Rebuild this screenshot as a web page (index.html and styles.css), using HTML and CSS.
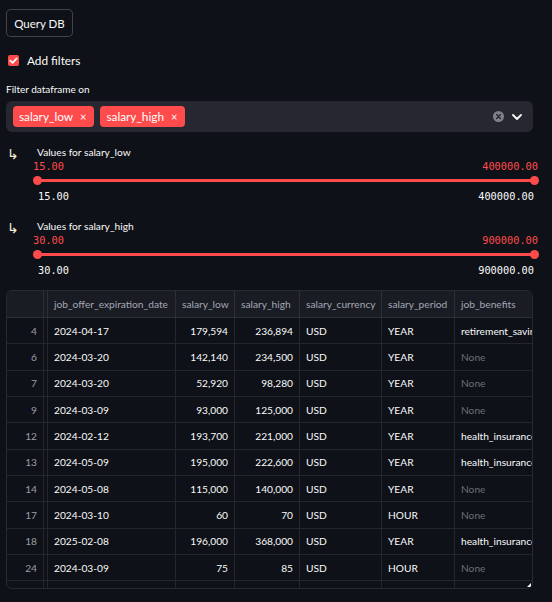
FILE: index.html
```html
<!DOCTYPE html>
<html>
<head>
<meta charset="utf-8">
<link rel="stylesheet" href="styles.css">
</head>
<body>
<div class="main">
  <button class="btn">Query DB</button>

  <label class="check-row">
    <span class="checkbox"><svg width="9" height="9" viewBox="0 0 10 10"><path d="M1.5 5.2 L4 7.6 L8.6 2.6" fill="none" stroke="#fff" stroke-width="1.8" stroke-linecap="round" stroke-linejoin="round"/></svg></span>
    <span class="check-label">Add filters</span>
  </label>

  <div class="field-label">Filter dataframe on</div>
  <div class="multiselect">
    <div class="tags">
      <span class="tag">salary_low<span class="tag-x">×</span></span>
      <span class="tag">salary_high<span class="tag-x">×</span></span>
    </div>
    <div class="ms-icons">
      <svg class="clear" width="11" height="11" viewBox="0 0 11 11"><circle cx="5.5" cy="5.5" r="5.5" fill="#7e818b"/><path d="M3.6 3.6 L7.4 7.4 M7.4 3.6 L3.6 7.4" stroke="#262730" stroke-width="1.4" stroke-linecap="round"/></svg>
      <svg class="chev" width="10" height="6" viewBox="0 0 10 6"><path d="M1 1 L5 5 L9 1" fill="none" stroke="#fafafa" stroke-width="1.8" stroke-linecap="round" stroke-linejoin="round"/></svg>
    </div>
  </div>

  <div class="filter-row first">
    <div class="arrow">↳</div>
    <div class="slider">
      <div class="slider-label">Values for salary_low</div>
      <div class="thumb-values"><span>15.00</span><span>400000.00</span></div>
      <div class="track"><span class="thumb left"></span><span class="thumb right"></span></div>
      <div class="tick-values"><span>15.00</span><span>400000.00</span></div>
    </div>
  </div>

  <div class="filter-row second">
    <div class="arrow">↳</div>
    <div class="slider">
      <div class="slider-label">Values for salary_high</div>
      <div class="thumb-values"><span>30.00</span><span>900000.00</span></div>
      <div class="track"><span class="thumb left"></span><span class="thumb right"></span></div>
      <div class="tick-values"><span>30.00</span><span>900000.00</span></div>
    </div>
  </div>

  <div class="grid">
    <div class="row head">
      <div class="c idx"></div><div class="c gap"></div>
      <div class="c">job_offer_expiration_date</div>
      <div class="c">salary_low</div>
      <div class="c">salary_high</div>
      <div class="c">salary_currency</div>
      <div class="c">salary_period</div>
      <div class="c last">job_benefits</div>
    </div>
    <div class="row"><div class="c idx">4</div><div class="c gap"></div><div class="c">2024-04-17</div><div class="c num">179,594</div><div class="c num">236,894</div><div class="c">USD</div><div class="c">YEAR</div><div class="c last">retirement_savings</div></div>
    <div class="row"><div class="c idx">6</div><div class="c gap"></div><div class="c">2024-03-20</div><div class="c num">142,140</div><div class="c num">234,500</div><div class="c">USD</div><div class="c">YEAR</div><div class="c last none">None</div></div>
    <div class="row"><div class="c idx">7</div><div class="c gap"></div><div class="c">2024-03-20</div><div class="c num">52,920</div><div class="c num">98,280</div><div class="c">USD</div><div class="c">YEAR</div><div class="c last none">None</div></div>
    <div class="row"><div class="c idx">9</div><div class="c gap"></div><div class="c">2024-03-09</div><div class="c num">93,000</div><div class="c num">125,000</div><div class="c">USD</div><div class="c">YEAR</div><div class="c last none">None</div></div>
    <div class="row"><div class="c idx">12</div><div class="c gap"></div><div class="c">2024-02-12</div><div class="c num">193,700</div><div class="c num">221,000</div><div class="c">USD</div><div class="c">YEAR</div><div class="c last">health_insurance</div></div>
    <div class="row"><div class="c idx">13</div><div class="c gap"></div><div class="c">2024-05-09</div><div class="c num">195,000</div><div class="c num">222,600</div><div class="c">USD</div><div class="c">YEAR</div><div class="c last">health_insurance</div></div>
    <div class="row"><div class="c idx">14</div><div class="c gap"></div><div class="c">2024-05-08</div><div class="c num">115,000</div><div class="c num">140,000</div><div class="c">USD</div><div class="c">YEAR</div><div class="c last none">None</div></div>
    <div class="row"><div class="c idx">17</div><div class="c gap"></div><div class="c">2024-03-10</div><div class="c num">60</div><div class="c num">70</div><div class="c">USD</div><div class="c">HOUR</div><div class="c last none">None</div></div>
    <div class="row"><div class="c idx">18</div><div class="c gap"></div><div class="c">2025-02-08</div><div class="c num">196,000</div><div class="c num">368,000</div><div class="c">USD</div><div class="c">YEAR</div><div class="c last">health_insurance</div></div>
    <div class="row"><div class="c idx">24</div><div class="c gap"></div><div class="c">2024-03-09</div><div class="c num">75</div><div class="c num">85</div><div class="c">USD</div><div class="c">HOUR</div><div class="c last none">None</div></div>
    <div class="row"><div class="c idx"></div><div class="c gap"></div><div class="c"></div><div class="c"></div><div class="c"></div><div class="c"></div><div class="c"></div><div class="c last"></div></div>
    <span class="resize"></span>
  </div>
</div>
</body>
</html>
```

FILE: styles.css
```css
* { box-sizing: border-box; }
html, body { margin: 0; padding: 0; }
body {
  background: #0e1117;
  color: #fafafa;
  font-family: "Lato", "Noto Sans", sans-serif;
  width: 552px;
  height: 602px;
  overflow: hidden;
}
.main {
  width: 527px;
  margin-left: 6px;
  padding-top: 9px;
}
.btn {
  display: block;
  height: 28px;
  width: 67px;
  padding: 0;
  background: #0e1117;
  color: #fafafa;
  border: 1px solid rgba(250, 250, 250, 0.22);
  border-radius: 5px;
  font-family: inherit;
  font-size: 11.5px;
}
.check-row {
  display: flex;
  align-items: center;
  gap: 8px;
  height: 22px;
  margin-top: 12px;
  padding-left: 2px;
}
.checkbox {
  width: 11px;
  height: 11px;
  border-radius: 2px;
  background: #ff4b4b;
  display: flex;
  align-items: center;
  justify-content: center;
}
.check-label { font-size: 11.8px; }
.field-label {
  font-size: 10px;
  height: 14px;
  line-height: 14px;
  margin-top: 11px;
}
.multiselect {
  margin-top: 5px;
  height: 31px;
  background: #262730;
  border-radius: 6px;
  display: flex;
  align-items: center;
  justify-content: space-between;
  padding: 0 11px 0 7px;
}
.tags { display: flex; gap: 6px; }
.tag {
  display: flex;
  align-items: center;
  height: 21px;
  background: #ff4b4b;
  color: #fff;
  border-radius: 4px;
  padding: 0 8px 0 6px;
  font-size: 11.8px;
}
.tag-x { margin-left: 7px; font-size: 11px; }
.ms-icons { display: flex; align-items: center; gap: 8px; }
.filter-row {
  display: flex;
  margin-right: -5px;
}
.filter-row.first { margin-top: 14px; }
.filter-row.second { margin-top: 16.5px; }
.arrow {
  width: 27px;
  padding-left: 1px;
  font-family: "DejaVu Sans", sans-serif;
  font-size: 14px;
  line-height: 16px;
  color: #f4efd8;
}
.slider { flex: 1; }
.slider-label {
  font-size: 10.2px;
  height: 13px;
  line-height: 13px;
  padding-left: 4px;
}
.thumb-values, .tick-values {
  display: flex;
  justify-content: space-between;
  font-family: "DejaVu Sans Mono", monospace;
  font-size: 10.3px;
  height: 14px;
  line-height: 14px;
}
.thumb-values { color: #ff4b4b; margin-top: 0; }
.tick-values { padding: 0 4px 0 5px; margin-top: 7px; }
.track {
  position: relative;
  height: 3px;
  margin: 6px 4px 0 4px;
  background: #ff4b4b;
  border-radius: 2px;
}
.thumb {
  position: absolute;
  top: -3px;
  width: 9px;
  height: 9px;
  border-radius: 50%;
  background: #ff4b4b;
}
.thumb.left { left: -4.5px; }
.thumb.right { right: -4.5px; }
.grid {
  position: relative;
  margin-top: 13.5px;
  height: 299px;
  border: 1px solid #272a31;
  border-radius: 6px;
  overflow: hidden;
  font-size: 10.2px;
}
.row {
  display: grid;
  grid-template-columns: 37px 4px 128px 59px 65px 82px 73px 110px;
  height: 26.33px;
  border-bottom: 1px solid #23262d;
}
.row.head {
  height: 27px;
  background: #1a1c24;
  color: #a3a8b4;
  border-bottom-color: #2c2f37;
}
.c {
  border-right: 1px solid #23262d;
  padding: 0 6px;
  display: flex;
  align-items: center;
  white-space: nowrap;
  overflow: hidden;
}
.head .c { border-right-color: #2c2f37; }
.c.last { border-right: none; }
.c.idx { justify-content: flex-end; color: #9a9ea8; }
.c.gap { padding: 0; }
.c.num { justify-content: flex-end; }
.c.none { color: #6b6f78; }
.resize {
  position: absolute;
  right: 1px;
  bottom: 1px;
  width: 4px;
  height: 4px;
  background: #fafafa;
  clip-path: polygon(100% 0, 100% 100%, 0 100%);
}
```
